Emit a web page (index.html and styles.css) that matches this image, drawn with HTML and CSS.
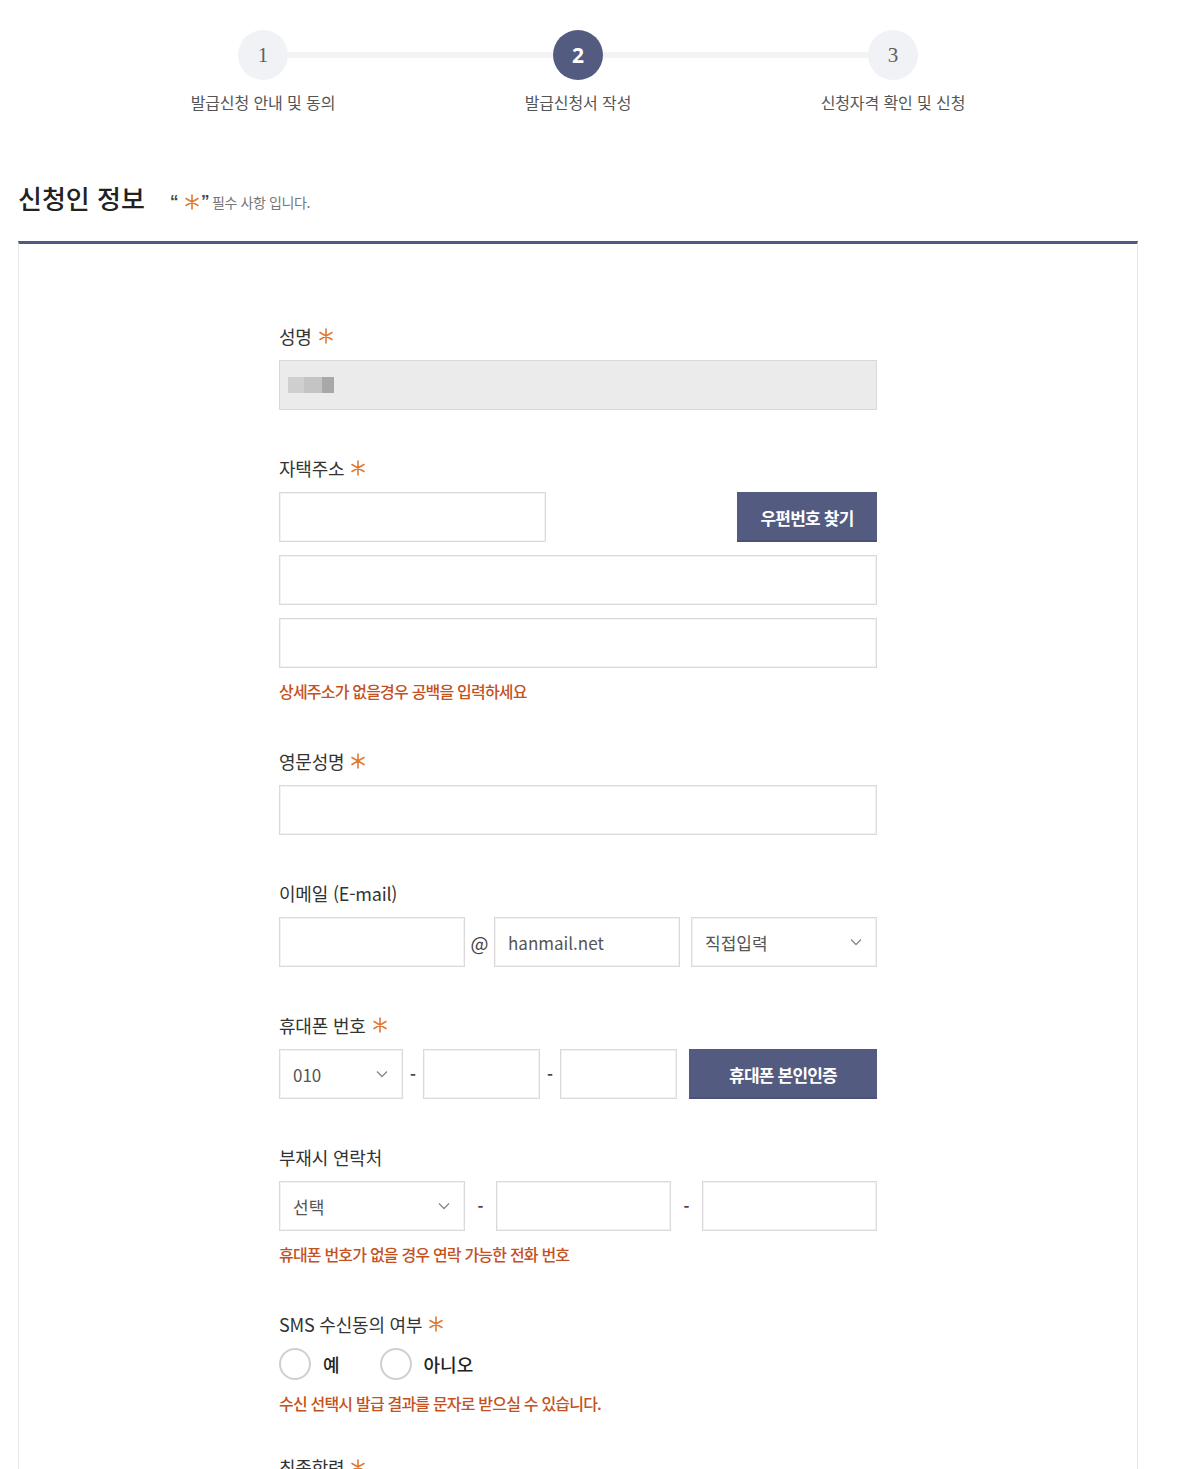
FILE: index.html
```html
<!DOCTYPE html>
<html lang="ko">
<head>
<meta charset="utf-8">
<title>신청인 정보</title>
<link rel="stylesheet" href="styles.css">
</head>
<body>
<div class="page">
  <ol class="stepper">
    <li class="step"><span class="step-num">1</span><span class="step-label">발급신청 안내 및 동의</span></li>
    <li class="step is-current"><span class="step-num">2</span><span class="step-label">발급신청서 작성</span></li>
    <li class="step"><span class="step-num">3</span><span class="step-label">신청자격 확인 및 신청</span></li>
  </ol>

  <div class="title-row">
    <h2 class="title">신청인 정보</h2>
    <p class="title-note"><span class="q">“</span><svg class="req req-title" viewBox="0 0 16 16"><path d="M8 1v14M2 4.5l12 7M2 11.5l12-7"/></svg><span class="q q-close">”</span><span>필수 사항 입니다.</span></p>
  </div>

  <div class="form-box">
    <div class="form">
      <div class="field">
        <div class="label">성명 <svg class="req" viewBox="0 0 16 16"><path d="M8 1v14M2 4.5l12 7M2 11.5l12-7"/></svg></div>
        <div class="input is-readonly"><span class="blur"><i></i><i></i><i></i></span></div>
      </div>

      <div class="field">
        <div class="label">자택주소 <svg class="req" viewBox="0 0 16 16"><path d="M8 1v14M2 4.5l12 7M2 11.5l12-7"/></svg></div>
        <div class="row row-zip">
          <div class="input w-zip"></div>
          <button class="btn w-btn-zip">우편번호 찾기</button>
        </div>
        <div class="input stack"></div>
        <div class="input stack"></div>
        <p class="note">상세주소가 없을경우 공백을 입력하세요</p>
      </div>

      <div class="field">
        <div class="label">영문성명 <svg class="req" viewBox="0 0 16 16"><path d="M8 1v14M2 4.5l12 7M2 11.5l12-7"/></svg></div>
        <div class="input"></div>
      </div>

      <div class="field">
        <div class="label">이메일 (E-mail)</div>
        <div class="row">
          <div class="input w186"></div>
          <span class="sep at">@</span>
          <div class="input w186 has-text">hanmail.net</div>
          <span class="gap11"></span>
          <div class="input select w186">직접입력<svg class="chev" viewBox="0 0 12 8"><path d="M1 1.5l5 5 5-5"/></svg></div>
        </div>
      </div>

      <div class="field">
        <div class="label">휴대폰 번호 <svg class="req" viewBox="0 0 16 16"><path d="M8 1v14M2 4.5l12 7M2 11.5l12-7"/></svg></div>
        <div class="row">
          <div class="input select w124">010<svg class="chev" viewBox="0 0 12 8"><path d="M1 1.5l5 5 5-5"/></svg></div>
          <span class="sep dash w20">-</span>
          <div class="input w117"></div>
          <span class="sep dash w20">-</span>
          <div class="input w117"></div>
          <span class="gap12"></span>
          <button class="btn w188">휴대폰 본인인증</button>
        </div>
      </div>

      <div class="field">
        <div class="label">부재시 연락처</div>
        <div class="row">
          <div class="input select w186">선택<svg class="chev" viewBox="0 0 12 8"><path d="M1 1.5l5 5 5-5"/></svg></div>
          <span class="sep dash w31">-</span>
          <div class="input w175"></div>
          <span class="sep dash w31">-</span>
          <div class="input w175"></div>
        </div>
        <p class="note">휴대폰 번호가 없을 경우 연락 가능한 전화 번호</p>
      </div>

      <div class="field">
        <div class="label">SMS 수신동의 여부 <svg class="req" viewBox="0 0 16 16"><path d="M8 1v14M2 4.5l12 7M2 11.5l12-7"/></svg></div>
        <div class="radios">
          <label class="radio"><span class="radio-dot"></span><span class="radio-text">예</span></label>
          <label class="radio"><span class="radio-dot"></span><span class="radio-text">아니오</span></label>
        </div>
        <p class="note">수신 선택시 발급 결과를 문자로 받으실 수 있습니다.</p>
      </div>

      <div class="field field-last">
        <div class="label">최종학력 <svg class="req" viewBox="0 0 16 16"><path d="M8 1v14M2 4.5l12 7M2 11.5l12-7"/></svg></div>
        <div class="input"></div>
      </div>
    </div>
  </div>
</div>
</body>
</html>
```

FILE: styles.css
```css
* { box-sizing: border-box; }
html, body { margin: 0; padding: 0; background: #fff; }
body {
  font-family: "Noto Sans CJK KR", "Noto Sans", sans-serif;
  color: #333;
  overflow: hidden;
}
.page {
  width: 1120px;
  margin-left: 18px;
}

/* stepper */
.stepper {
  list-style: none;
  margin: 0 auto;
  padding: 30px 0 0;
  width: 945px;
  display: grid;
  grid-template-columns: repeat(3, 315px);
}
.step {
  position: relative;
  display: flex;
  flex-direction: column;
  align-items: center;
}
.step:not(:last-child)::after {
  content: "";
  position: absolute;
  top: 22px;
  left: calc(50% + 25px);
  width: 265px;
  height: 6px;
  background: #f3f3f6;
}
.step-num {
  width: 50px;
  height: 50px;
  border-radius: 50%;
  background: #f1f2f6;
  color: #5f5f5f;
  display: flex;
  align-items: center;
  justify-content: center;
  font-family: "Liberation Serif", "DejaVu Serif", serif;
  font-size: 21px;
  position: relative;
  z-index: 1;
}
.is-current .step-num {
  background: #535b80;
  color: #fff;
  font-family: "Noto Sans", sans-serif;
  font-weight: 700;
  font-size: 21px;
}
.step-label {
  margin-top: 12px;
  line-height: 20px;
  font-size: 16px;
  color: #555;
  letter-spacing: -0.1px;
}

/* title */
.title-row {
  display: flex;
  align-items: center;
  margin-top: 69px;
  height: 34px;
  margin-bottom: 26px;
}
.title {
  margin: 0;
  font-size: 26px;
  line-height: 34px;
  font-weight: 500;
  color: #222;
  letter-spacing: 0;
}
.title-note {
  margin: 0 0 0 25px;
  font-size: 14px;
  line-height: 20px;
  color: #777;
  letter-spacing: -0.4px;
  display: flex;
  align-items: center;
  padding-top: 8px;
}
.q { color: #444; font-weight: 700; font-size: 17px; font-family: "Liberation Sans", sans-serif; line-height: 20px; }
.q-close { margin-right: 3px; }
.req-title { width: 13px; height: 13px; margin: 0 1px 0 2px; }

/* box */
.form-box {
  border-top: 3px solid #505a80;
  border-left: 1px solid #e6e6e6;
  border-right: 1px solid #e6e6e6;
  padding: 79px 0 0 260px;
  height: 1300px;
}
.form {
  width: 598px;
  display: flex;
  flex-direction: column;
  gap: 45px;
}
.label {
  display: flex;
  align-items: center;
  font-size: 18px;
  line-height: 26px;
  letter-spacing: -0.2px;
  color: #333;
  margin-bottom: 11px;
}
.req {
  width: 16px;
  height: 16px;
  margin-left: 6px;
  fill: none;
  stroke: #e07a35;
  stroke-width: 1.6;
  stroke-linecap: round;
}

.input {
  height: 50px;
  border: 1px solid #dadada;
  box-shadow: inset 0 0 0 1px #f2f2f2;
  background: #fff;
  display: flex;
  align-items: center;
  padding: 0 13px;
  font-size: 17px;
  color: #555;
  flex: none;
}
.input.stack { margin-top: 13px; }
.is-readonly { background: #ebebeb; border-color: #d8d8d8; box-shadow: none; padding-left: 8px; }
.blur { display: flex; gap: 0; }
.blur i { display: block; width: 16px; height: 16px; background: #d2d2d2; }
.blur i:nth-child(1) { background: #cfcfcf; }
.blur i:nth-child(2) { background: #c4c4c4; width: 18px; }
.blur i:nth-child(3) { background: #a8a8a8; width: 12px; }

.row { display: flex; align-items: center; }
.row-zip { justify-content: space-between; }
.w-zip { width: 267px; }
.w186 { width: 186px; }
.w124 { width: 124px; }
.w117 { width: 117px; }
.w175 { width: 175px; }
.w188 { width: 188px; }
.w-btn-zip { width: 140px; }
.gap11 { width: 11px; flex: none; }
.gap12 { width: 12px; flex: none; }

.sep {
  flex: none;
  display: flex;
  justify-content: center;
  color: #444;
}
.at { width: 29px; font-size: 19px; }
.dash { font-size: 16px; font-weight: 700; }
.w20 { width: 20px; }
.w31 { width: 31px; }

.select { justify-content: space-between; padding-right: 14px; }
.chev {
  width: 12px;
  height: 8px;
  fill: none;
  stroke: #888;
  stroke-width: 1.3;
}

.btn {
  height: 50px;
  border: 0;
  background: #535b80;
  color: #fff;
  font-family: inherit;
  font-size: 17px;
  font-weight: 700;
  letter-spacing: -0.8px;
  flex: none;
  padding: 0;
  box-shadow: inset 0 -2px 0 #4a5275;
}

.note {
  margin: 13px 0 2px;
  font-size: 16px;
  line-height: 20px;
  color: #c4511e;
  font-weight: 500;
  letter-spacing: -0.8px;
}

.radios {
  display: flex;
  align-items: center;
  gap: 40px;
  height: 32px;
  margin-top: 1px;
}
.radio { display: flex; align-items: center; gap: 12px; }
.radio-dot {
  width: 32px;
  height: 32px;
  border-radius: 50%;
  border: 2px solid #cfcfcf;
  background: #fff;
}
.radio-text { font-size: 18px; color: #222; font-weight: 500; }

.field-last { margin-top: -6px; }
```
